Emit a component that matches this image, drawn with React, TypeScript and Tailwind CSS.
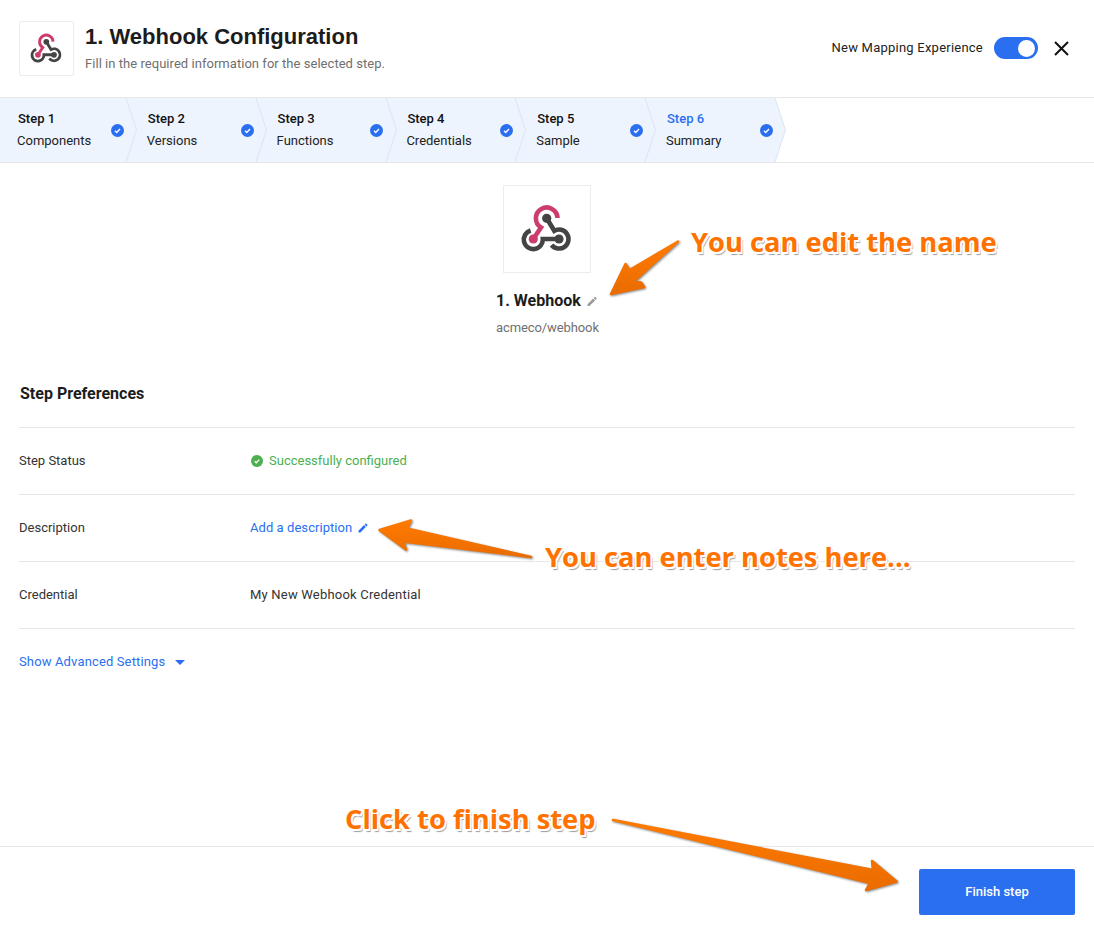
const steps = [
  { step: "Step 1", name: "Components" },
  { step: "Step 2", name: "Versions" },
  { step: "Step 3", name: "Functions" },
  { step: "Step 4", name: "Credentials" },
  { step: "Step 5", name: "Sample" },
  { step: "Step 6", name: "Summary", active: true },
];

const WebhookIcon = ({ className }: { className: string }) => (
  <svg viewBox="0 0 88 88" fill="none" className={className}>
    <g stroke="#444444" strokeWidth="4.6">
      <path d="M27.6 45.5 A9.5 9.5 0 1 0 39.8 54 L56 54" />
      <path d="M43.7 33.3 L51.3 45.8 A9.5 9.5 0 1 1 48.6 60" />
    </g>
    <path d="M30.3 54 L38 42.5 A10.8 10.8 0 1 1 54.5 33" stroke="#cc3d6e" strokeWidth="4.6" />
    <circle cx="43.7" cy="33.3" r="4.6" fill="#444444" />
    <circle cx="56" cy="54" r="4.6" fill="#444444" />
    <circle cx="30.3" cy="54" r="4.6" fill="#cc3d6e" />
  </svg>
);

const Pencil = ({ className }: { className: string }) => (
  <svg viewBox="0 0 24 24" fill="currentColor" className={className}>
    <path d="M3 17.25V21h3.75L17.81 9.94l-3.75-3.75L3 17.25zM20.71 7.04c.39-.39.39-1.02 0-1.41l-2.34-2.34c-.39-.39-1.02-.39-1.41 0l-1.83 1.83 3.75 3.75 1.83-1.83z" />
  </svg>
);

const CheckDot = ({ className }: { className: string }) => (
  <svg viewBox="0 0 13 13" className={className}>
    <circle cx="6.5" cy="6.5" r="6.5" fill="currentColor" />
    <path d="M4 6.8 L5.7 8.4 L9 5" fill="none" stroke="#ffffff" strokeWidth="1.4" />
  </svg>
);

const Row = ({ label, children }: { label: string; children: React.ReactNode }) => (
  <div className="flex h-[67px] items-center border-t border-[#e8e8e8] text-[13px] text-[#333333]">
    <div className="w-[231px]">{label}</div>
    {children}
  </div>
);

const noteClass =
  "absolute font-['Open_Sans',sans-serif] text-[27.3px] leading-none font-bold whitespace-nowrap text-[#ff7200] [text-shadow:-1.5px_-1.5px_0_#fff,1.5px_-1.5px_0_#fff,-1.5px_1.5px_0_#fff,1.5px_1.5px_0_#fff,2px_3px_1px_#999]";

export default function App() {
  return (
    <div className="relative flex h-[934px] w-full flex-col overflow-hidden bg-white font-['Roboto',sans-serif]">
      <svg viewBox="0 0 0 0" className="absolute h-0 w-0">
        <defs>
          <linearGradient id="orange" x1="0" y1="0" x2="0" y2="1">
            <stop offset="0" stopColor="#ff7a00" />
            <stop offset="1" stopColor="#ea6c00" />
          </linearGradient>
        </defs>
      </svg>

      <header className="flex h-[98px] shrink-0 items-start border-b border-[#e8e8e8] pt-[21px] pr-[25px] pl-[19px]">
        <div className="flex size-[55px] items-center justify-center rounded-[2px] border border-[#ececec]">
          <WebhookIcon className="size-[55px] shrink-0" />
        </div>
        <div className="ml-[11px] flex-1">
          <h1 className="mt-[2px] font-['Liberation_Sans',sans-serif] text-[22px] leading-[28px] font-bold text-[#1c1c1c]">
            1. Webhook Configuration
          </h1>
          <p className="mt-[5px] text-[13px] leading-[15px] tracking-[0.04px] text-[#6f6f6f]">
            Fill in the required information for the selected step.
          </p>
        </div>
        <div className="mt-[16px] flex items-center">
          <span className="text-[13px] tracking-[0.23px] text-[#222222]">New Mapping Experience</span>
          <div className="ml-[11px] flex h-[22px] w-[44px] items-center justify-end rounded-full bg-[#2a6ff0] pr-[3px]">
            <div className="size-[17px] rounded-full bg-white" />
          </div>
          <svg viewBox="0 0 15 15" className="ml-[16px] size-[15px]" stroke="#111111" strokeWidth="2">
            <path d="M1 1 L14 14 M14 1 L1 14" />
          </svg>
        </div>
      </header>

      <nav className="flex h-[65px] shrink-0 border-b border-[#e8e8e8]">
        {steps.map((s, i) => (
          <div
            key={s.step}
            style={{ zIndex: steps.length - i }}
            className="relative flex h-[64px] w-[129.8px] items-center pr-[6px] pl-[17px]"
          >
            <svg viewBox="0 0 141 64" className="absolute top-0 left-0 h-[64px] w-[141px] overflow-visible">
              <path d="M-4 0 H126 L136.5 32 L126 64 H-4 Z" fill="#edf4fd" />
              <path d="M126 0 L136.5 32 L126 64" fill="none" stroke="#dbe5f5" />
            </svg>
            <div className="relative flex-1 text-[13px] leading-[22px]">
              <div className={`pl-[1px] font-medium ${s.active ? "text-[#2a6ff0]" : "text-[#111111]"}`}>{s.step}</div>
              <div className="text-[#222222]">{s.name}</div>
            </div>
            <CheckDot className="relative size-[13px] text-[#2a6ff0]" />
          </div>
        ))}
      </nav>

      <main className="flex-1 px-[19px]">
        <div className="mt-[22px] flex flex-col items-center">
          <div className="flex size-[88px] items-center justify-center border border-[#ececec]">
            <WebhookIcon className="size-[88px] shrink-0" />
          </div>
          <div className="mt-[18px] flex w-[102px] items-center text-[16px] leading-[20px] font-bold whitespace-nowrap text-[#1c1c1c]">
            1. Webhook
            <Pencil className="ml-[5px] size-[13px] text-[#9a9a9a]" />
          </div>
          <div className="mt-[8px] w-[102px] text-[13px] leading-[18px] tracking-[-0.1px] whitespace-nowrap text-[#6f6f6f]">acmeco/webhook</div>
        </div>
        <h2 className="mt-[47px] h-[43px] pl-[1px] text-[16px] leading-[20px] font-bold text-[#1c1c1c]">Step Preferences</h2>
        <Row label="Step Status">
          <CheckDot className="mr-[6px] ml-[1px] size-[12px] text-[#4caf50]" />
          <span className="text-[#4caf50]">Successfully configured</span>
        </Row>
        <Row label="Description">
          <span className="tracking-[0.06px] text-[#2a6ff0]">Add a description</span>
          <Pencil className="ml-[5px] size-[12px] text-[#2a6ff0]" />
        </Row>
        <Row label="Credential">
          <span className="tracking-[0.2px]">My New Webhook Credential</span>
        </Row>
        <div className="flex h-[67px] items-center border-t border-[#e8e8e8] text-[13px] tracking-[0.14px] text-[#2a6ff0]">
          Show Advanced Settings
          <svg viewBox="0 0 10 5" className="ml-[10px] h-[5px] w-[10px]" fill="currentColor">
            <path d="M0 0 H10 L5 5 Z" />
          </svg>
        </div>
      </main>

      <footer className="flex h-[88px] shrink-0 items-start justify-end border-t border-[#e8e8e8] pt-[22px] pr-[19px]">
        <button className="h-[46px] w-[156px] rounded-[2px] bg-[#2a6ff0] text-[13px] font-medium text-white">Finish step</button>
      </footer>

      {/* annotations on top of the screenshot */}
      <svg viewBox="0 0 1094 934" className="pointer-events-none absolute inset-0 z-10 h-[934px] w-[1094px] drop-shadow-[1px_1px_1px_#888888]">
        <g fill="url(#orange)" stroke="url(#orange)" strokeWidth="2.5" strokeLinejoin="round">
          <path d="M678 241.5 L629.5 270 L625.5 264 L611 294 L644 287 L641 282.5 L633 282 Z" />
          <path d="M379.5 530 L411 520.5 L407 528.5 L531 557 L403 541.5 L406 549.5 Z" />
          <path d="M613 820 L873 870 L872 861 L896.5 881.5 L866 890 L870 883 Z" />
        </g>
      </svg>
      <div className={`${noteClass} top-[228px] left-[691px] z-10`}>You can edit the name</div>
      <div className={`${noteClass} top-[543px] left-[545px] z-10`}>You can enter notes here...</div>
      <div className={`${noteClass} top-[805px] left-[345px] z-10`}>Click to finish step</div>
    </div>
  );
}
